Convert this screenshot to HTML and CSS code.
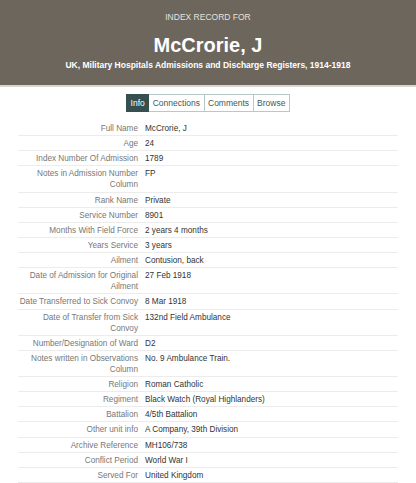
FILE: index.html
```html
<!DOCTYPE html>
<html lang="en">
<head>
<meta charset="utf-8">
<title>McCrorie, J</title>
<link rel="stylesheet" href="styles.css">
</head>
<body>
<header class="hero">
  <div class="eyebrow">INDEX RECORD FOR</div>
  <h1 class="name">McCrorie, J</h1>
  <div class="collection">UK, Military Hospitals Admissions and Discharge Registers, 1914-1918</div>
</header>
<nav class="tabs">
  <span class="tab active">Info</span>
  <span class="tab">Connections</span>
  <span class="tab">Comments</span>
  <span class="tab">Browse</span>
</nav>
<table class="facts">
  <colgroup><col class="label-col"><col></colgroup>
  <tr><th>Full Name</th><td>McCrorie, J</td></tr>
  <tr><th>Age</th><td>24</td></tr>
  <tr><th>Index Number Of Admission</th><td>1789</td></tr>
  <tr><th>Notes in Admission Number Column</th><td>FP</td></tr>
  <tr><th>Rank Name</th><td>Private</td></tr>
  <tr><th>Service Number</th><td>8901</td></tr>
  <tr><th>Months With Field Force</th><td>2 years 4 months</td></tr>
  <tr><th>Years Service</th><td>3 years</td></tr>
  <tr><th>Ailment</th><td>Contusion, back</td></tr>
  <tr><th>Date of Admission for Original Ailment</th><td>27 Feb 1918</td></tr>
  <tr><th>Date Transferred to Sick Convoy</th><td>8 Mar 1918</td></tr>
  <tr><th>Date of Transfer from Sick Convoy</th><td>132nd Field Ambulance</td></tr>
  <tr><th>Number/Designation of Ward</th><td>D2</td></tr>
  <tr><th>Notes written in Observations Column</th><td>No. 9 Ambulance Train.</td></tr>
  <tr><th>Religion</th><td>Roman Catholic</td></tr>
  <tr><th>Regiment</th><td>Black Watch (Royal Highlanders)</td></tr>
  <tr><th>Battalion</th><td>4/5th Battalion</td></tr>
  <tr><th>Other unit info</th><td>A Company, 39th Division</td></tr>
  <tr><th>Archive Reference</th><td>MH106/738</td></tr>
  <tr><th>Conflict Period</th><td>World War I</td></tr>
  <tr><th>Served For</th><td>United Kingdom</td></tr>
</table>
</body>
</html>
```
FILE: styles.css
```css
* { box-sizing: border-box; }

body {
  margin: 0;
  font-family: "Liberation Sans", Arial, sans-serif;
  background: #ffffff;
  color: #3a3a3a;
}

.hero {
  background: #6d665d;
  color: #ffffff;
  text-align: center;
  padding: 12px 8px 15px;
  border-bottom: 2px solid #d9d6d1;
}

.eyebrow {
  font-size: 8.5px;
  color: #e4e1dc;
  line-height: 10px;
}

.name {
  margin: 12px 0 0;
  font-size: 20px;
  font-weight: 700;
  line-height: 22px;
}

.collection {
  margin-top: 4px;
  font-size: 8.5px;
  font-weight: 700;
  line-height: 10px;
}

.tabs {
  display: flex;
  justify-content: center;
  margin-top: 7px;
}

.tab {
  font-size: 8.5px;
  line-height: 16px;
  padding: 0 3.5px;
  border: 1px solid #b8c8c6;
  border-left: none;
  color: #3d5a58;
}

.tab:first-child { border-left: 1px solid #b8c8c6; }

.tab.active {
  background: #35504f;
  border-color: #35504f;
  color: #ffffff;
}

.facts {
  width: 380px;
  margin: 9px auto 0;
  border-collapse: collapse;
  table-layout: fixed;
  font-size: 8.2px;
  line-height: 11px;
}

.label-col { width: 127px; }

.facts tr { border-bottom: 1px solid #ececec; }

.facts th {
  text-align: right;
  font-weight: 400;
  color: #777777;
  padding: 2px 7px 1.15px 0;
  vertical-align: top;
}

.facts td {
  color: #333333;
  padding: 2px 0 1.15px;
  vertical-align: top;
}
```
